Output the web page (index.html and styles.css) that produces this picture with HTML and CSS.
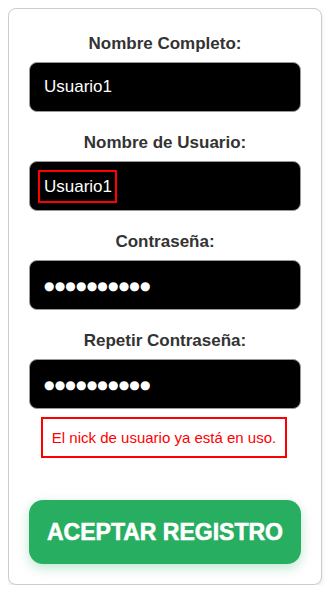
FILE: index.html
```html
<!DOCTYPE html>
<html>

<head>
    <meta charset="utf-8">
    <link rel="stylesheet" href="styles.css">
</head>

<body>
    <form class="register-card">
        <div class="field">
            <label class="field-label">Nombre Completo:</label>
            <div class="field-input">Usuario1</div>
        </div>
        <div class="field">
            <label class="field-label">Nombre de Usuario:</label>
            <div class="field-input field-invalid">
                <span class="invalid-mark">Usuario1</span>
            </div>
        </div>
        <div class="field">
            <label class="field-label">Contraseña:</label>
            <div class="field-input field-password">●●●●●●●●●●</div>
        </div>
        <div class="field">
            <label class="field-label">Repetir Contraseña:</label>
            <div class="field-input field-password">●●●●●●●●●●</div>
        </div>

        <div class="error-msg">El nick de usuario ya está en uso.</div>

        <button type="button" class="submit-btn">Aceptar Registro</button>
    </form>
</body>

</html>
```

FILE: styles.css
```css
body {
    margin: 8px;
    background: #fff;
    font-family: "Liberation Sans", Arial, sans-serif;
}

.register-card {
    width: 272px;
    padding: 25px 20px 20px 20px;
    background: #fff;
    border: 1px solid #ccc;
    border-radius: 8px;
    box-shadow: 0 2px 4px rgba(0, 0, 0, 0.1);
}

.field {
    display: flex;
    flex-direction: column;
    margin-bottom: 21px;
}

.field:nth-child(4) {
    margin-bottom: 8px;
}

.field-label {
    text-align: center;
    font-size: 17px;
    line-height: 20px;
    font-weight: bold;
    color: #333;
    margin-bottom: 8px;
}

.field-input {
    box-sizing: border-box;
    display: flex;
    align-items: center;
    width: 100%;
    height: 50px;
    padding: 0 14px;
    background: #000;
    color: #fff;
    border: 1px solid #999;
    border-radius: 8px;
    font-size: 17px;
}

.field-invalid {
    padding-left: 8px;
}

.invalid-mark {
    border: 2px solid #f00;
    padding: 5px 3px 4px 4px;
}

.field-password {
    padding-left: 14px;
    padding-top: 2px;
    font-family: "DejaVu Sans", sans-serif;
    font-size: 12px;
    letter-spacing: 0.2px;
}

.error-msg {
    margin: 0 14px 0 12px;
    padding: 10px 0;
    border: 2px solid #f00;
    color: #f00;
    font-size: 15px;
    line-height: 17px;
    text-align: center;
}

.submit-btn {
    display: block;
    width: 100%;
    height: 64px;
    margin-top: 42px;
    background: #27ae60;
    color: #fff;
    border: none;
    border-radius: 14px;
    font-family: "Liberation Sans", Arial, sans-serif;
    font-size: 23px;
    font-weight: bold;
    text-transform: uppercase;
    -webkit-text-stroke: 0.6px #fff;
    box-shadow: 0 4px 12px rgba(39, 174, 96, 0.3);
    cursor: pointer;
}
```
